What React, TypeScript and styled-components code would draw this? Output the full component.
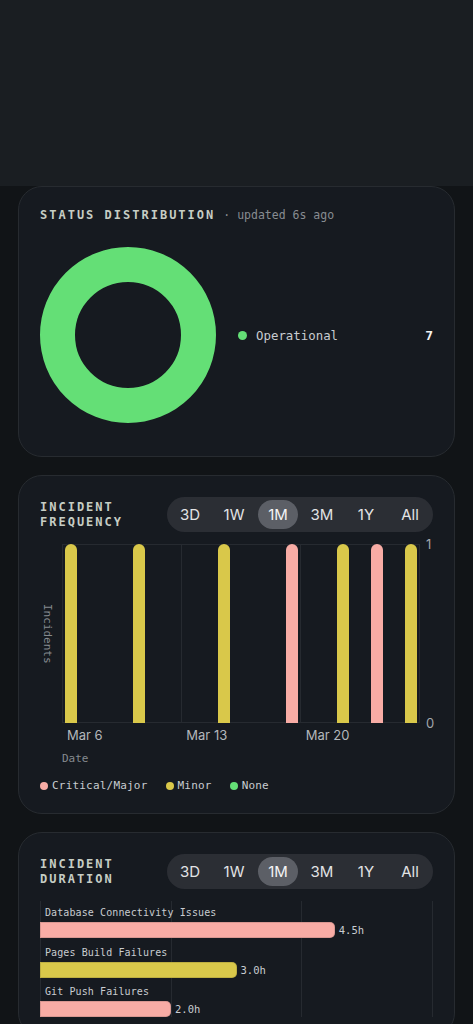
import React from 'react';
import styled, { createGlobalStyle } from 'styled-components';

const MONO = '"DejaVu Sans Mono", "Liberation Mono", monospace';
const SANS = 'Inter, "Noto Sans", "Liberation Sans", sans-serif';

const PINK = '#f8aca5';
const YELLOW = '#d9c84a';
const GREEN = '#64df76';
const GRID = '#262a30';

const GlobalStyle = createGlobalStyle`
  * { box-sizing: border-box; }
  body {
    margin: 0;
    background-color: #111417;
    font-family: ${MONO};
    color: #c8ccd0;
  }
`;

const TopBar = styled.div`
  height: 186px;
  background-color: #1a1e22;
`;

const Stack = styled.div`
  display: flex;
  flex-direction: column;
  gap: 18px;
  padding: 0 18px 18px;
`;

const Card = styled.section<{ $bottom?: number }>`
  background-color: #161a20;
  border: 1px solid #272b30;
  border-radius: 24px;
  padding: 21px 21px ${(p) => p.$bottom ?? 19}px;
`;

const TitleLine = styled.div`
  display: flex;
  align-items: center;
  height: 14px;
`;

const Title = styled.h2`
  margin: 0;
  font-family: ${MONO};
  font-size: 12px;
  font-weight: 700;
  letter-spacing: 2px;
  line-height: 15px;
  color: #c6cdc4;
  text-transform: uppercase;
`;

const Meta = styled.span`
  margin-left: 8px;
  font-size: 11.5px;
  color: #878c91;
`;

const DistRow = styled.div`
  display: flex;
  align-items: center;
  gap: 22px;
  margin-top: 25px;
`;

const LegendList = styled.ul`
  flex: 1;
  margin: 0;
  padding: 0;
  list-style: none;
`;

const LegendRow = styled.li`
  display: flex;
  align-items: center;
  font-size: 12.4px;
  color: #c8ccd0;

  .count {
    margin-left: auto;
    font-weight: 700;
    font-size: 13px;
    color: #f2f2f2;
  }
`;

const Dot = styled.span<{ $color: string; $size: number }>`
  width: ${(p) => p.$size}px;
  height: ${(p) => p.$size}px;
  border-radius: 50%;
  background-color: ${(p) => p.$color};
  flex-shrink: 0;
`;

const Header = styled.div`
  display: flex;
  align-items: center;
  justify-content: space-between;
`;

const Segmented = styled.div`
  display: flex;
  gap: 4px;
  padding: 3px;
  background-color: #2b2e34;
  border-radius: 18px;
`;

const Segment = styled.button<{ $active?: boolean }>`
  width: 40px;
  height: 29px;
  border: none;
  border-radius: 15px;
  padding: 0;
  font-family: ${SANS};
  font-size: 15px;
  color: ${(p) => (p.$active ? '#f4f4f5' : '#e2e3e5')};
  background-color: ${(p) => (p.$active ? '#5c5f66' : 'transparent')};
  cursor: pointer;
`;

const FreqChart = styled.div`
  display: grid;
  grid-template-columns: 22px 1fr 13px;
  grid-template-rows: 179px auto auto;
  margin-top: 12px;
`;

const AxisTitle = styled.div`
  writing-mode: vertical-rl;
  align-self: center;
  justify-self: start;
  padding-left: 1px;
  font-size: 11px;
  color: #858a8f;
`;

const weekLines = `
  linear-gradient(${GRID}, ${GRID}) 33.333% 0 / 1px 100% no-repeat,
  linear-gradient(${GRID}, ${GRID}) 66.667% 0 / 1px 100% no-repeat
`;

const Plot = styled.div<{ $days: number }>`
  display: grid;
  grid-template-columns: repeat(${(p) => p.$days}, 1fr);
  align-items: end;
  background: ${weekLines};
  box-shadow: inset 0 0 0 1px ${GRID};
`;

const Bar = styled.div<{ $color: string }>`
  grid-row: 1;
  justify-self: center;
  width: 12px;
  border-radius: 6px 6px 0 0;
  background-color: ${(p) => p.$color};
`;

const YTicks = styled.div`
  display: flex;
  flex-direction: column;
  justify-content: space-between;
  margin: -8px 0;
  padding-left: 6px;
  font-family: ${SANS};
  font-size: 13px;
  line-height: 16px;
  color: #a2a6ab;
`;

const XTicks = styled.div`
  grid-column: 2;
  display: grid;
  grid-template-columns: repeat(3, 1fr);
  padding-top: 4px;
  font-family: ${SANS};
  font-size: 13px;
  line-height: 16px;
  color: #b3b7bb;

  span {
    padding-left: 5px;
  }
`;

const AxisCaption = styled.div`
  grid-column: 2;
  margin-top: 8px;
  font-size: 11px;
  line-height: 16px;
  color: #858a8f;
`;

const Legend = styled.div`
  display: flex;
  align-items: center;
  gap: 18px;
  margin-top: 11px;
  font-size: 11px;
  line-height: 16px;
  letter-spacing: 0.2px;
  color: #c8ccd0;
`;

const LegendItem = styled.span`
  display: flex;
  align-items: center;
  gap: 4px;
`;

const DurationChart = styled.div`
  margin-top: 12px;
  padding-top: 3px;
  display: flex;
  flex-direction: column;
  gap: 5.5px;
  background:
    linear-gradient(${GRID}, ${GRID}) 0 0 / 1px 100% no-repeat,
    ${weekLines},
    linear-gradient(${GRID}, ${GRID}) 100% 0 / 1px 100% no-repeat;
`;

const DurationRow = styled.div`
  display: flex;
  flex-direction: column;
`;

const DurationLabel = styled.div`
  padding-left: 5px;
  font-size: 10px;
  letter-spacing: 0.1px;
  line-height: 18px;
  color: #c8ccd0;
`;

const DurationTrack = styled.div`
  display: flex;
  align-items: center;
  height: 16px;
`;

const DurationBar = styled.div<{ $color: string }>`
  height: 16px;
  border-radius: 0 5px 5px 0;
  background-color: ${(p) => p.$color};
  box-shadow: inset 0 0 0 1px rgba(0, 0, 0, 0.12);
`;

const DurationValue = styled.span`
  margin-left: 4px;
  font-size: 10.5px;
  color: #c8ccd0;
`;

const ranges = ['3D', '1W', '1M', '3M', '1Y', 'All'];

const RangePicker = () => (
  <Segmented>
    {ranges.map((r) => (
      <Segment key={r} $active={r === '1M'}>{r}</Segment>
    ))}
  </Segmented>
);

const DAYS = 21;
const incidents = [
  { day: 0, color: YELLOW },
  { day: 4, color: YELLOW },
  { day: 9, color: YELLOW },
  { day: 13, color: PINK },
  { day: 16, color: YELLOW },
  { day: 18, color: PINK },
  { day: 20, color: YELLOW },
];

const durations = [
  { name: 'Database Connectivity Issues', hours: 4.5, color: PINK },
  { name: 'Pages Build Failures', hours: 3.0, color: YELLOW },
  { name: 'Git Push Failures', hours: 2.0, color: PINK },
];

const Donut = () => (
  <svg width="176" height="176" viewBox="0 0 176 176">
    <circle cx="88" cy="88" r="70.5" fill="none" stroke={GREEN} strokeWidth="35" />
  </svg>
);

const App = () => {
  return (
    <>
      <GlobalStyle />
      <TopBar />
      <Stack>
        <Card $bottom={33}>
          <TitleLine>
            <Title>Status Distribution</Title>
            <Meta>· updated 6s ago</Meta>
          </TitleLine>
          <DistRow>
            <Donut />
            <LegendList>
              <LegendRow>
                <Dot $color={GREEN} $size={9} style={{ marginRight: 9 }} />
                Operational
                <span className="count">7</span>
              </LegendRow>
            </LegendList>
          </DistRow>
        </Card>

        <Card>
          <Header>
            <Title>Incident<br />Frequency</Title>
            <RangePicker />
          </Header>
          <FreqChart>
            <AxisTitle>Incidents</AxisTitle>
            <Plot $days={DAYS}>
              {incidents.map((i) => (
                <Bar
                  key={i.day}
                  $color={i.color}
                  style={{ gridColumn: i.day + 1, height: '100%' }}
                />
              ))}
            </Plot>
            <YTicks>
              <span>1</span>
              <span>0</span>
            </YTicks>
            <XTicks>
              <span>Mar 6</span>
              <span>Mar 13</span>
              <span>Mar 20</span>
            </XTicks>
            <AxisCaption>Date</AxisCaption>
          </FreqChart>
          <Legend>
            <LegendItem><Dot $color={PINK} $size={8} />Critical/Major</LegendItem>
            <LegendItem><Dot $color={YELLOW} $size={8} />Minor</LegendItem>
            <LegendItem><Dot $color={GREEN} $size={8} />None</LegendItem>
          </Legend>
        </Card>

        <Card>
          <Header>
            <Title>Incident<br />Duration</Title>
            <RangePicker />
          </Header>
          <DurationChart>
            {durations.map((d) => (
              <DurationRow key={d.name}>
                <DurationLabel>{d.name}</DurationLabel>
                <DurationTrack>
                  <DurationBar $color={d.color} style={{ width: `${(d.hours / 6) * 100}%` }} />
                  <DurationValue>{d.hours.toFixed(1)}h</DurationValue>
                </DurationTrack>
              </DurationRow>
            ))}
          </DurationChart>
        </Card>
      </Stack>
    </>
  );
};

export default App;
